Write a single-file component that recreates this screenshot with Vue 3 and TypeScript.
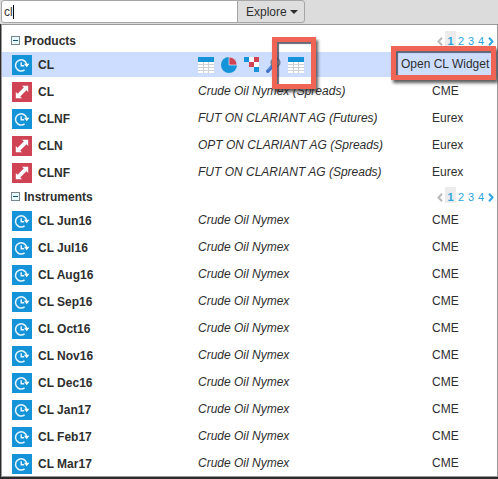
<script setup lang="ts">
import { ref } from 'vue'

type Kind = 'outright' | 'spread'

interface Entry {
  kind: Kind
  symbol: string
  description: string
  market: string
  active?: boolean
}

interface Section {
  title: string
  entries: Entry[]
}

const query = ref('cl')

const months = ['Jun16', 'Jul16', 'Aug16', 'Sep16', 'Oct16', 'Nov16', 'Dec16', 'Jan17', 'Feb17', 'Mar17']

const sections: Section[] = [
  {
    title: 'Products',
    entries: [
      { kind: 'outright', symbol: 'CL', description: '', market: 'Open CL Widget', active: true },
      { kind: 'spread', symbol: 'CL', description: 'Crude Oil Nymex (Spreads)', market: 'CME' },
      { kind: 'outright', symbol: 'CLNF', description: 'FUT ON CLARIANT AG (Futures)', market: 'Eurex' },
      { kind: 'spread', symbol: 'CLN', description: 'OPT ON CLARIANT AG (Spreads)', market: 'Eurex' },
      { kind: 'spread', symbol: 'CLNF', description: 'FUT ON CLARIANT AG (Spreads)', market: 'Eurex' },
    ],
  },
  {
    title: 'Instruments',
    entries: months.map((m): Entry => ({
      kind: 'outright',
      symbol: `CL ${m}`,
      description: 'Crude Oil Nymex',
      market: 'CME',
    })),
  },
]
</script>

<template>
  <div class="page">
    <header class="toolbar">
      <div class="search">
        <input v-model="query" class="search-input" type="text" aria-label="Search" />
        <span class="caret"></span>
      </div>
      <button class="explore" type="button">Explore<span class="arrow"></span></button>
    </header>

    <main class="results">
      <section v-for="section in sections" :key="section.title" class="section">
        <div class="section-head">
          <button class="toggle" type="button" aria-label="Collapse"></button>
          <h2>{{ section.title }}</h2>
          <nav class="pager">
            <a href="#" class="step prev" aria-label="Previous">
              <svg width="6" height="9" viewBox="0 0 6 9"><path d="M5 .8 1.5 4.5 5 8.2" /></svg>
            </a>
            <a href="#" class="num current">1</a>
            <a href="#" class="num">2</a>
            <a href="#" class="num">3</a>
            <a href="#" class="num">4</a>
            <a href="#" class="step next" aria-label="Next">
              <svg width="6" height="9" viewBox="0 0 6 9"><path d="M1 .8 4.5 4.5 1 8.2" /></svg>
            </a>
          </nav>
        </div>

        <ul class="rows">
          <li v-for="(entry, i) in section.entries" :key="i" class="row" :class="{ active: entry.active }">
            <svg v-if="entry.kind === 'outright'" class="kind" viewBox="0 0 20 20">
              <rect width="20" height="20" fill="#1593d8" />
              <path d="M12.600 14.800A5.600 5.600 0 1 1 14.600 9.200" fill="none" stroke="#e8f6ff" stroke-width="1.500" />
              <path d="M12 8.800h5.400l-2.700 3.400z" fill="#fff" />
              <path d="M9.200 7.200v3.600h3" fill="none" stroke="#e8f6ff" stroke-width="1.400" />
            </svg>
            <svg v-else class="kind" viewBox="0 0 20 20">
              <rect width="20" height="20" fill="#d04355" />
              <path d="M10 3.800h6.200V10l-1.800-1.800L8.200 14.400l1.800 1.800H3.800V10l1.800 1.800L11.800 5.600z" fill="#fff" />
            </svg>

            <span class="symbol">{{ entry.symbol }}</span>

            <span v-if="entry.active" class="tools">
              <button type="button" aria-label="Grid">
                <svg width="16" height="16" viewBox="0 0 16 16">
                  <path fill="#fff" d="M0 5h16v11H0z" />
                  <path fill="#1593d8" d="M0 0h16v5H0z" />
                  <path fill="#cfd1d4" d="M0 7h16v1H0zM0 10h16v1H0zM0 13h16v1H0zM5 5h1v11H5zM10 5h1v11h-1z" />
                </svg>
              </button>
              <button type="button" aria-label="Chart">
                <svg width="16" height="16" viewBox="0 0 16 16">
                  <circle cx="8" cy="8" r="8" fill="#1593d8" />
                  <path d="M8 8V0a8 8 0 0 1 8 8z" fill="#d04355" stroke="#e6e9fa" stroke-width=".7" />
                </svg>
              </button>
              <button type="button" aria-label="Matrix">
                <svg width="15" height="15" viewBox="0 0 15 15">
                  <path fill="#fff" d="M5 0h5v5H5zM10 5h5v5h-5z" />
                  <path fill="#1593d8" d="M0 0h5v5H0zM10 10h5v5h-5z" />
                  <path fill="#d04355" d="M10 0h5v5h-5zM5 5h5v5H5z" />
                </svg>
              </button>
              <button type="button" aria-label="Find">
                <svg width="16" height="16" viewBox="0 0 16 16">
                  <path d="M1.800 14.200 6.500 9" stroke="#3b70c4" stroke-width="3.400" stroke-linecap="round" />
                  <path d="M1.600 13 5 9.400" stroke="#79a8e8" />
                  <circle cx="9.500" cy="5.500" r="4.300" fill="#d9e8f6" stroke="#77818f" stroke-width="1.600" />
                </svg>
              </button>
              <button type="button" aria-label="Open widget" class="marked">
                <svg width="16" height="16" viewBox="0 0 16 16">
                  <path fill="#fff" d="M0 5h16v11H0z" />
                  <path fill="#1593d8" d="M0 0h16v5H0z" />
                  <path fill="#cfd1d4" d="M0 7h16v1H0zM0 10h16v1H0zM0 13h16v1H0zM5 5h1v11H5zM10 5h1v11h-1z" />
                </svg>
                <span class="callout callout-icon"></span>
              </button>
            </span>
            <span v-else class="description">{{ entry.description }}</span>

            <span class="market">
              {{ entry.market }}
              <span v-if="entry.active" class="callout callout-text"></span>
            </span>
          </li>
        </ul>
      </section>
    </main>
  </div>
</template>

<style>
body {
  background: #2b2b2b;
}
</style>

<style scoped>
.page {
  font: 12px/16px "Liberation Sans", Arial, sans-serif;
  color: #2e2e2e;
  overflow: hidden;
  padding-bottom: 2px;
}

.toolbar {
  display: flex;
  height: 24px;
  padding: 0 1px;
  box-sizing: border-box;
  background: #dcdcdc;
}

.search {
  position: relative;
  display: flex;
  flex: 0 0 237px;
}

.search-input {
  width: 100%;
  height: 23px;
  box-sizing: border-box;
  margin: 0;
  padding: 0 2px;
  border: 1px solid #a6a6a6;
  border-radius: 3px 0 0 3px;
  background: #fff;
  color: #333;
  font: inherit;
  outline: none;
}

.caret {
  position: absolute;
  left: 12px;
  top: 5px;
  width: 1px;
  height: 14px;
  background: #000;
}

.explore {
  display: flex;
  align-items: center;
  gap: 3px;
  height: 23px;
  box-sizing: border-box;
  margin-left: -1px;
  padding: 0 6px 0 8px;
  border: 1px solid #a6a6a6;
  border-radius: 0 3px 3px 0;
  background: #dedede;
  color: #2e2e2e;
  font: inherit;
}

.arrow {
  border: 4px solid transparent;
  border-top-color: #2e2e2e;
  border-bottom: 0;
}

.results {
  margin-left: 1px;
  padding-top: 6px;
  border: 1px solid #999;
  background: #fff;
}

.section + .section {
  margin-top: 2px;
}

.section-head {
  display: flex;
  align-items: center;
  height: 21px;
  box-sizing: border-box;
  padding: 0 3px 2px 9px;
}

.toggle {
  display: flex;
  align-items: center;
  justify-content: center;
  width: 9px;
  height: 9px;
  box-sizing: border-box;
  margin: 0 4px 0 0;
  padding: 0;
  border: 1px solid #77868c;
  background: #e9faff;
}

.toggle::before {
  content: "";
  width: 5px;
  height: 1px;
  background: #155574;
}

h2 {
  margin: 0;
  font-size: 12px;
  line-height: 16px;
}

.pager {
  display: flex;
  align-items: flex-end;
  align-self: flex-start;
  margin-left: auto;
}

.pager a {
  color: #2ea5dd;
  font-size: 11px;
  line-height: 12px;
  text-decoration: none;
}

.num {
  width: 10px;
  text-align: center;
}

.pager .current {
  width: 11px;
  padding-top: 4px;
  background: #ececec;
  font-weight: bold;
}

.step {
  display: flex;
  padding-bottom: 1px;
}

.step path {
  fill: none;
  stroke: currentColor;
  stroke-width: 2;
}

.pager .prev {
  margin-right: 2px;
  color: #b9b9b9;
}

.next {
  margin-left: 2px;
}

.rows {
  display: grid;
  gap: 2px;
  margin: 0;
  padding: 0;
  list-style: none;
}

.row {
  display: grid;
  grid-template-columns: 20px 154px 1fr 65px;
  column-gap: 6px;
  align-items: center;
  height: 25px;
  padding-left: 10px;
}

.row.active {
  grid-template-columns: 20px 154px 1fr 96px;
  background: #ccddff;
}

.kind {
  width: 20px;
  height: 20px;
  margin-top: 1px;
}

.symbol {
  font-weight: bold;
}

.description,
.market {
  margin-bottom: 2px;
  white-space: nowrap;
}

.description {
  font-style: italic;
}

.market {
  position: relative;
}

.tools {
  display: flex;
  align-items: center;
  gap: 7px;
}

.tools button {
  display: flex;
  padding: 0;
  border: 0;
  background: none;
}

.tools .marked {
  position: relative;
  margin-left: -1px;
}

.callout {
  position: absolute;
  z-index: 1;
  box-sizing: border-box;
  border: 5px solid #f06455;
  box-shadow: 2px 3px 3px rgba(40, 40, 40, 0.75), inset 2px 2px 1px rgba(50, 55, 70, 0.75);
  pointer-events: none;
}

.callout-icon {
  inset: -20px -12px -16px -16px;
}

.callout-text {
  inset: -10px 1px -8px -10px;
}
</style>
